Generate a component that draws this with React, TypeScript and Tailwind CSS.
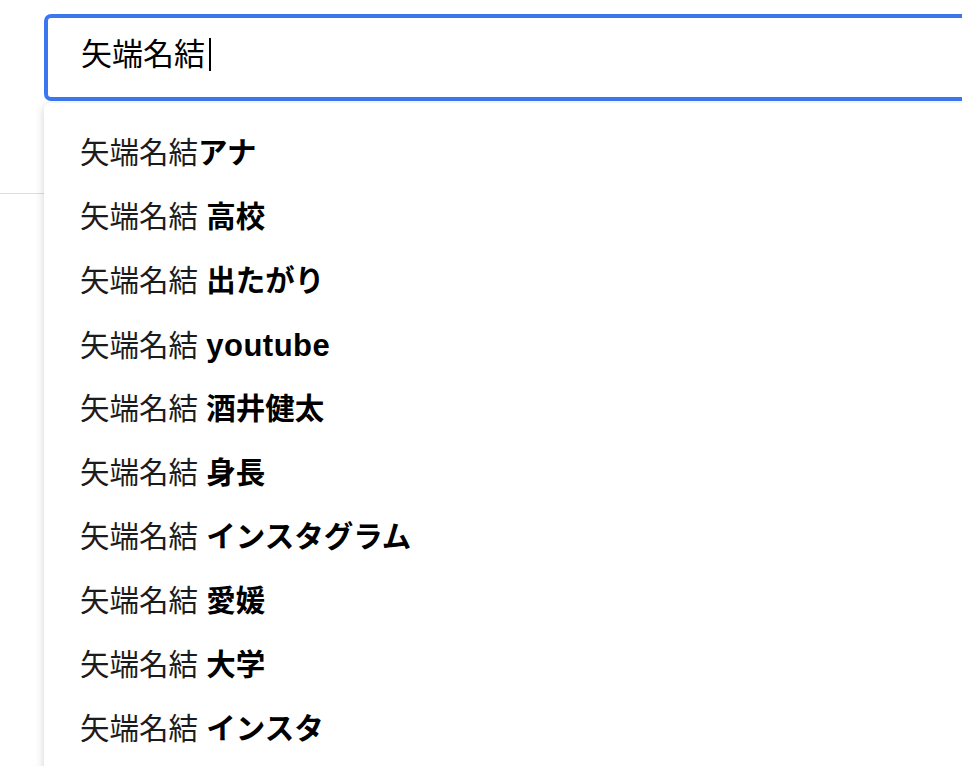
const query = "矢端名結";

const suggestions: { sep: string; rest: string; latin?: boolean }[] = [
  { sep: "", rest: "アナ" },
  { sep: " ", rest: "高校" },
  { sep: " ", rest: "出たがり" },
  { sep: " ", rest: "youtube", latin: true },
  { sep: " ", rest: "酒井健太" },
  { sep: " ", rest: "身長" },
  { sep: " ", rest: "インスタグラム" },
  { sep: " ", rest: "愛媛" },
  { sep: " ", rest: "大学" },
  { sep: " ", rest: "インスタ" },
];

export default function App() {
  return (
    <div className="relative h-[766px] w-[962px] overflow-hidden bg-white font-['Liberation_Sans','Noto_Sans_CJK_JP',sans-serif] text-[#1c1c1c]">
      {/* page header, partly hidden under the suggestion list */}
      <header className="h-[194px] border-b border-[#dedede] pl-[44px] pt-[14px]">
        <div className="flex h-[87px] w-[960px] items-center rounded-[7px] border-4 border-[#3b78f0] pb-[6px] pl-[33px]">
          <span className="text-[31px] leading-none text-black">{query}</span>
          <span className="ml-[4px] h-[33px] w-[2px] bg-black" />
        </div>
      </header>

      <ul className="absolute left-[44px] top-[103px] w-[960px] rounded-t-[6px] bg-white pb-[40px] pt-[18px] shadow-[0_2px_10px_rgba(0,0,0,0.18)]">
        {suggestions.map((s) => (
          <li
            key={s.rest}
            className="flex h-[64px] items-center pl-[36px] text-[29.5px] leading-none"
          >
            <span className="whitespace-pre">
              {query}
              {s.sep}
              <b
                className={
                  s.latin
                    ? "text-[31px] font-bold tracking-[0.5px] text-black"
                    : "font-bold text-black"
                }
              >
                {s.rest}
              </b>
            </span>
          </li>
        ))}
      </ul>
    </div>
  );
}
